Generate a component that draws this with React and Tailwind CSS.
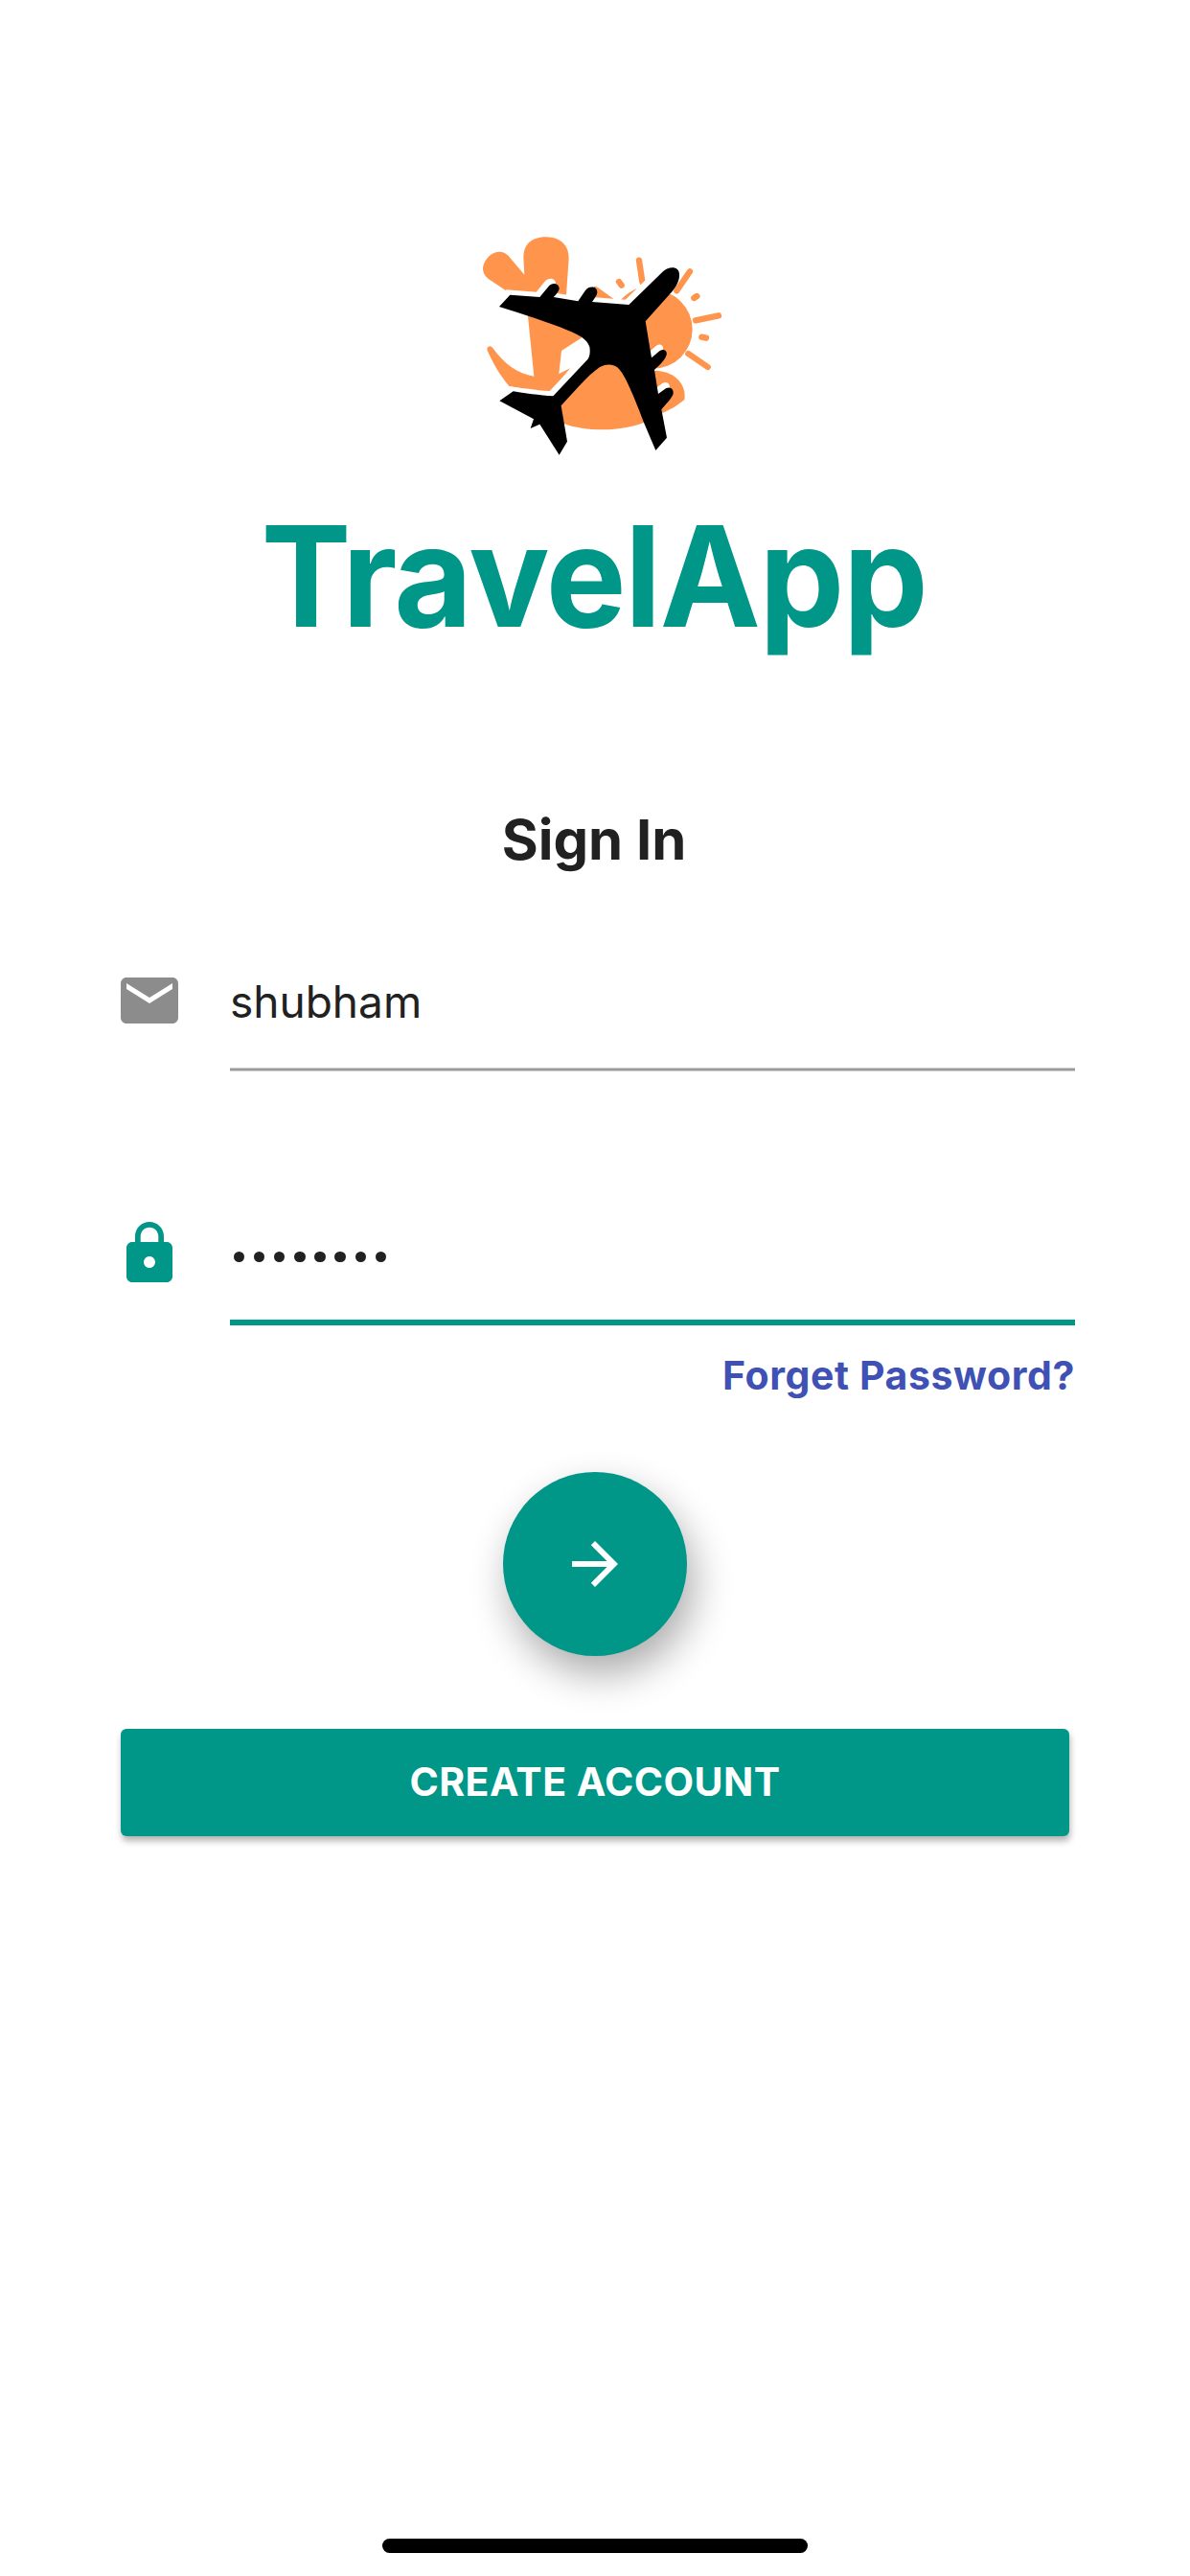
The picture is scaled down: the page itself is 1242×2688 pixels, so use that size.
import React from "react";

const PLANE =
  "M123 270L157 233L250 240L278 206C290 192 312 198 311 215C308 225 300 232 293 240L370 253L393 219C405 203 431 206 430 226C429 236 421 245 414 255L529 264L636 160C657 141 689 144 687 172C687 190 678 206 665 222L581 316L600 430L626 408C639 400 650 408 647 421C643 436 625 454 609 468L621 543L645 526C659 518 670 528 668 543C664 557 642 578 631 592L648 680L613 720L577 635C550 563 520 490 500 467C485 447 455 448 437 460C400 485 350 545 317 580L336 692L311 734L250 638L221 651L231 622L124 565L167 535C200 540 250 548 292 550L400 435C408 425 408 408 406 396C398 370 370 358 340 345C270 315 190 292 123 270Z";

function Logo() {
  return (
    <svg viewBox="0 0 870 780" className="ml-2 h-[260px] w-[290px]" aria-hidden="true">
      <g fill="#ff944d">
        <path d="M142 218L88 182C78 174 71 162 72 148C76 120 102 98 122 98C136 98 146 104 152 111L202 170L199 115C199 70 230 52 270 52C312 52 341 75 341 118L333 234L240 260Z" />
        <path d="M212 290L232 488C180 480 140 450 103 400C98 390 85 392 85 405C100 440 125 485 155 520L283 540L345 463L310 480L318 408L382 367L390 300Z" />
        <path d="M420 206C428 206 434 211 440 216L482 246L420 250Z" />
        <path d="M504 248C520 232 535 222 552 214L552 260Z" />
        <circle cx="605" cy="341" r="123" />
        <path d="M560 480L615 470C680 474 710 520 703 561C680 580 655 596 620 608Z" />
      </g>
      <g stroke="#ff944d" strokeWidth="19" strokeLinecap="round">
        <path d="M561 125L571 192M720 160L679 220M498 192L506 203M733 243L742 237M738 313L810 298M757 365L771 368M715 417L776 459" />
      </g>
      <path d={PLANE} fill="#fff" transform="translate(-11 -16)" />
      <path d="M317 575L410 450L520 450L590 627C510 663 400 663 322 635Z" fill="#ff944d" />
      <path d={PLANE} fill="#000" />
    </svg>
  );
}

function MailIcon() {
  return (
    <svg viewBox="0 0 24 24" className="size-[72px] shrink-0" fill="#8c8c8c">
      <path d="M20 4H4c-1.1 0-1.99.9-1.99 2L2 18c0 1.1.9 2 2 2h16c1.1 0 2-.9 2-2V6c0-1.1-.9-2-2-2zm0 4l-8 5-8-5V6l8 5 8-5v2z" />
    </svg>
  );
}

function LockIcon() {
  return (
    <svg viewBox="0 0 24 24" className="size-[72px] shrink-0" fill="#009688">
      <path d="M18 8h-1V6c0-2.76-2.24-5-5-5S7 3.24 7 6v2H6c-1.1 0-2 .9-2 2v10c0 1.1.9 2 2 2h12c1.1 0 2-.9 2-2V10c0-1.1-.9-2-2-2zm-6 9c-1.1 0-2-.9-2-2s.9-2 2-2 2 .9 2 2-.9 2-2 2zm3.1-9H8.9V6c0-1.71 1.39-3.1 3.1-3.1 1.71 0 3.1 1.39 3.1 3.1v2z" />
    </svg>
  );
}

function ArrowIcon() {
  return (
    <svg viewBox="0 0 24 24" className="size-[72px]" fill="#fff">
      <path d="M12 4l-1.41 1.41L16.17 11H4v2h12.17l-5.58 5.59L12 20l8-8z" />
    </svg>
  );
}

export default function App() {
  return (
    <main className="flex h-[2688px] w-[1242px] flex-col items-center overflow-hidden bg-white pt-[230px] font-['Inter',sans-serif] text-[#212121]">
      <Logo />
      <h1 className="mt-[21px] mr-[3px] h-[180px] scale-x-[0.965] text-[146px] leading-[180px] font-bold whitespace-nowrap tracking-[-1.5px] text-[#009688]">
        TravelApp
      </h1>
      <h2 className="mt-[140px] mr-[2px] h-[90px] text-[58px] leading-[90px] font-bold whitespace-nowrap">Sign In</h2>

      <form className="flex w-full flex-col pr-[120px] pl-[120px]">
        <div className="mt-[87px] flex h-[120px]">
          <MailIcon />
          <div className="ml-12 flex flex-1 flex-col">
            <span className="h-[106px] text-[46px] leading-[74px]">shubham</span>
            <div className="h-1 shrink-0 border-y border-[#cdcdcd] bg-[#9b9b9b]" />
          </div>
        </div>

        <div className="mt-[144px] flex h-[111px]">
          <LockIcon />
          <div className="ml-12 flex flex-1 flex-col border-b-[6px] border-[#009688]">
            <div className="mt-[34px] ml-[4px] flex gap-[9.8px]" aria-label="password">
              {Array.from({ length: 8 }, (_, i) => (
                <span key={i} className="size-[11.3px] rounded-full bg-[#212121]" />
              ))}
            </div>
          </div>
        </div>

        <a className="mt-[22px] h-[60px] self-end text-[41px] leading-[60px] font-bold whitespace-nowrap tracking-[0.6px] text-[#3f51b5]">
          Forget Password?
        </a>

        <button
          type="button"
          aria-label="Sign in"
          className="mt-[71px] flex size-[192px] items-center justify-center self-center rounded-full bg-[#009688] shadow-[7px_19px_42px_rgba(0,0,0,0.33)]"
        >
          <ArrowIcon />
        </button>

        <button
          type="button"
          className="mt-[76px] ml-[6px] h-[112px] w-[990px] rounded-[6px] bg-[#009688] text-[41px] font-bold tracking-[0.45px] text-white shadow-[1px_5px_7px_rgba(0,0,0,0.3)]"
        >
          CREATE ACCOUNT
        </button>
      </form>

      <div className="mt-auto mb-6 h-[15px] w-[444px] shrink-0 rounded-full bg-black" />
    </main>
  );
}
